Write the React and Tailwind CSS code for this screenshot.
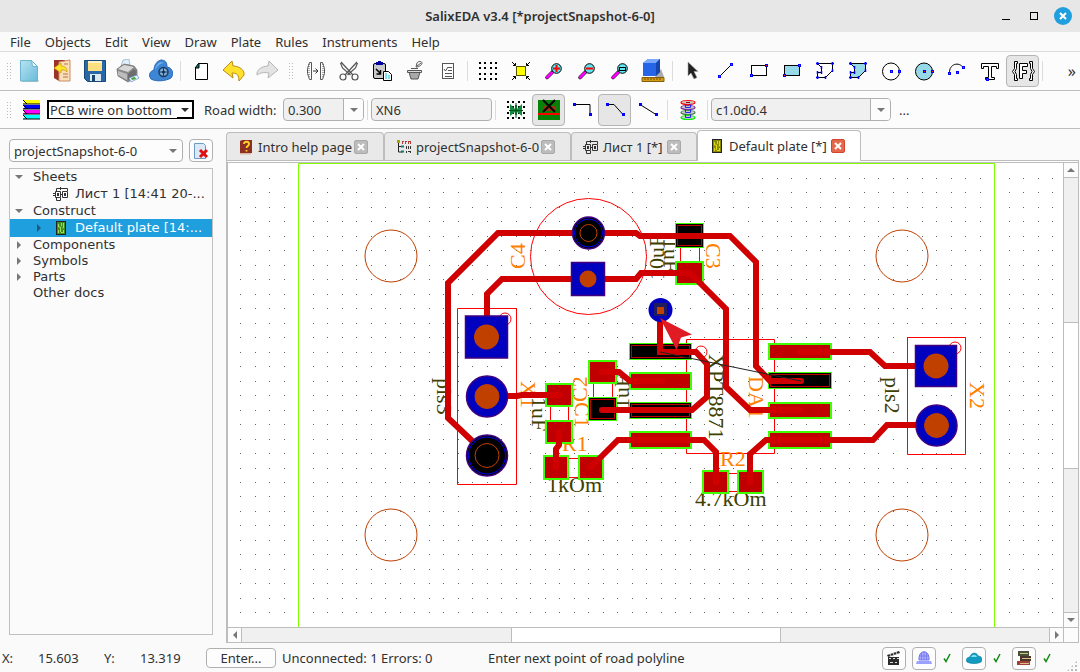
import { Fragment } from "react";

const RED = "#c00000";
const GREEN = "#40ff00";
const BLUE = "#0000bf";
const PURPLE = "#400080";
const ORANGE = "#c04000";

const MENU = ["File", "Objects", "Edit", "View", "Draw", "Plate", "Rules", "Instruments", "Help"];

// 24x24 drawings used by the toolbars
const ICONS = {
    new: (
        <>
            <path d="M4 21h18l-1 2H5z" fill="#b9c4c6" />
            <path d="M3.500 1.500h11l6 6v14.500h-17z" fill="url(#sky)" stroke="#6db5cf" />
            <path d="M14.500 1.500l1 6h5z" fill="#e3f6fc" stroke="#6db5cf" />
        </>
    ),
    open: (
        <>
            <path d="M4 1h11v2L9 22l-5-3z" fill="#9c3328" />
            <path d="M9 3l11-2v21H9z" fill="#f7dfb9" stroke="#cb8c62" />
            <path d="M13 15h5M13 18h5M14 5h4" stroke="#d5956d" strokeWidth="1.500" />
            <path d="M4 9l7-5v3c4 0 6 2 6 6-2-2-3-2-6-2v3z" fill="#ffe32b" stroke="#c6940b" strokeWidth=".7" />
        </>
    ),
    save: (
        <>
            <path d="M1.500 1.500h21v21h-18l-3-3z" fill="#2868a8" stroke="#174879" />
            <path d="M5 2h14v10H5z" fill="#ffdf80" />
            <path d="M5 2h14v2H5z" fill="#fff3c4" />
            <path d="M7 15h11v7H7z" fill="#dce8ef" />
            <path d="M9 16h3v6H9z" fill="#1c446f" />
        </>
    ),
    print: (
        <>
            <path d="M5 7L7 1l6-1 1 6z" fill="#dff0fc" stroke="#8eabc0" strokeWidth=".7" />
            <path d="M1 10l7-5 10 2 3 4v6l-9 6-10-6z" fill="#8a8a8a" stroke="#666" strokeWidth=".7" />
            <path d="M2 10l6-4 10 2-6 5z" fill="#d8d8d8" />
            <path d="M2 12l9 3v6l-9-5z" fill="#bdbdbd" />
            <path d="M12 15l6-5 2 2v5l-8 4z" fill="#6d6d6d" />
            <path d="M13 19l8-3 2 3-8 4z" fill="#f2f2f2" stroke="#5d8fd0" strokeWidth=".7" />
            <path d="M15 19l4-1 1 2-4 1z" fill="#36a53c" />
        </>
    ),
    cloud: (
        <>
            <path d="M2 20c-3-4-1-8 3-9 0-5 3-9 7-10 4 0 6 2 6 7 6 1 7 7 4 11-5 3-15 4-20 1z" fill="#3d86d6" stroke="#2769b4" />
            <path d="M6 11c1-7 6-9 9-7-4 0-7 3-9 7z" fill="#7ab5ee" />
            <circle cx="14.500" cy="13" r="4.500" fill="#7facd4" stroke="#1d3c62" strokeWidth="1.500" />
            <path d="M14.500 9v8M10.500 13h8" stroke="#1d3c62" />
            <circle cx="14.500" cy="13" r="1.500" fill="#143050" />
        </>
    ),
    page: (
        <>
            <path d="M10 4.500h8.500v16H6.500V9z" fill="#fff" stroke="#000" />
            <path d="M6 9l4-5v5z" fill="#008080" stroke="#000" />
        </>
    ),
    undo: <path d="M1 11l9-9 1 5c6 0 12 4 11 9l-5 6c0-6-2-8-7-8l1 5z" fill="#ffe12e" stroke="#b98b0e" />,
    redo: <path d="M23 11l-9-9-1 5C7 7 1 11 2 16c3-2 6-3 12-2l-1 5z" fill="#e3e3e3" stroke="#b5b5b5" />,
    mirror: (
        <g fill="none" stroke="#555">
            <path d="M7.500 3.500v17h-2l-1-3-1-3v-5l1-3 1-3zM16.500 3.500v17h2l1-3 1-3v-5l-1-3-1-3z" />
            <path d="M5 5v14M19 5v14" strokeDasharray="1 1" />
            <path d="M9 12h5M11.500 9.500l2.500 2.500-2.500 2.500" stroke="#333" />
        </g>
    ),
    cut: (
        <g fill="none" stroke="#555" strokeWidth="1.200">
            <path d="M4 3l12 13M3.500 4l2 5 8 7M20 3L8 16M20.500 4l-2 5-8 7" />
            <circle cx="6" cy="18" r="3" />
            <circle cx="18" cy="18" r="3" />
        </g>
    ),
    paste: (
        <>
            <rect x="3.500" y="4.500" width="12" height="15" rx="1.500" fill="#c9c9c9" stroke="#000" />
            <path d="M6 3h2V2h3v1h2v3H6z" fill="#0000a0" />
            <path d="M6 10l4 4M10.500 11v4h-4" stroke="#000" strokeWidth="1.500" fill="none" />
            <path d="M13.500 12.500h5l3 3v6h-8z" fill="#fff" stroke="#000" />
            <path d="M15 15h3M15 17h5M15 19h5" stroke="#00c8e0" strokeDasharray="2 1" />
        </>
    ),
    bucket: (
        <g stroke="#555">
            <path d="M6 13h11l-2 7H8z" fill="#aaa" />
            <path d="M4.500 11.500h14v2h-14zM8 9.500h7" fill="#ddd" />
            <path d="M13 8l1-4c1-2 5-2 5 0s-3 4-6 4zM14 7l4-3" fill="none" />
        </g>
    ),
    checklist: (
        <g fill="none" stroke="#555">
            <rect x="6.500" y="4.500" width="11" height="15" />
            <path d="M12 8.500h4M12 11.500h4M9 14.500h7M9 17.500h7M8 10l1.500 2L12 8" />
        </g>
    ),
    grid: (
        <g fill="#000">
            {[3, 8, 14, 19].map((x) => [3, 8, 14, 19].map((y) => <rect key={`${x}-${y}`} x={x} y={y} width="2" height="2" />))}
        </g>
    ),
    fit: (
        <>
            <rect x="7.500" y="7.500" width="9" height="9" fill="#ff0" stroke="#550" />
            <path d="M3 3l3.500 3.500M21 3l-3.500 3.500M3 21l3.500-3.500M21 21l-3.500-3.500M6.500 4v2.500H4M17.500 4v2.500H20M6.500 20v-2.500H4M17.500 20v-2.500H20" stroke="#000" fill="none" />
        </>
    ),
    zoomIn: <Magnifier sign={<path d="M11 9.500h7M14.500 6v7" stroke="#f00" strokeWidth="2" />} />,
    zoomOut: <Magnifier sign={<path d="M11 9.500h7" stroke="#f00" strokeWidth="2" />} />,
    zoomBox: <Magnifier sign={<rect x="11.500" y="8.500" width="6" height="3" fill="none" stroke="#000" />} />,
    cube: (
        <>
            <path d="M20 10l3 8h-9z" fill="#aaa" />
            <path d="M2 4l5-4h12v13l-4 4H2z" fill="#2765e8" />
            <path d="M2 4l5-4h12l-4 4z" fill="#79a9ff" />
            <path d="M15 4l4-4v13l-4 4z" fill="#1745ae" />
            <path d="M1 18.500h22v4H1z" fill="#d49c16" stroke="#85600b" />
            <path d="M4 19v2M7 19v2M10 19v2M13 19v2M16 19v2M19 19v2" stroke="#704b00" />
        </>
    ),
    pointer: <path d="M7 3v14l3-3 3 6 3-1.500-3-6h4z" fill="#222" stroke="#aaa" strokeWidth=".6" />,
    line: (
        <>
            <path d="M5 18L17 6" stroke="#000" />
            <Knots at={[[5, 17], [17, 5]]} />
        </>
    ),
    rect: (
        <>
            <rect x="4.500" y="6.500" width="15" height="10" fill="#fff" stroke="#000" />
            <Knots at={[[4, 16], [19, 6]]} />
        </>
    ),
    rectFill: (
        <>
            <rect x="4.500" y="6.500" width="15" height="10" fill="#96d9e8" stroke="#000" />
            <Knots at={[[4, 16], [19, 6]]} />
        </>
    ),
    poly: <Polygon fill="#fff" />,
    polyFill: <Polygon fill="#96d9e8" />,
    circle: (
        <>
            <circle cx="12" cy="12.500" r="8.500" fill="#fff" stroke="#000" />
            <Knots at={[[12, 12], [20, 12]]} />
        </>
    ),
    circleFill: (
        <>
            <circle cx="12" cy="12.500" r="8.500" fill="#96d9e8" stroke="#000" />
            <Knots at={[[12, 12], [20, 12]]} />
        </>
    ),
    arc: (
        <>
            <path d="M4.500 14C4 5 14 2 18.500 9" fill="none" stroke="#000" />
            <Knots at={[[4, 14], [12, 13], [18, 8]]} />
        </>
    ),
    text: (
        <>
            <path d="M3.500 4.500h17v5h-2v-2h-5v11h3v2h-9v-2h3v-11h-5v2h-2z" fill="#fff" stroke="#000" />
            <Knots at={[[9, 20]]} />
        </>
    ),
    format: (
        <g fill="#fff" stroke="#000">
            <path d="M6.500 2.500h-3v7l-2 3 2 3v6h3v-2h-1v-4l-1.500-3 1.500-3v-5h1zM18.500 2.500h3v7l2 3-2 3v6h-3v-2h1v-4l1.500-3-1.500-3v-5h-1z" />
            <path d="M8.500 4.500h8v3h-5v4h4v3h-4v5h-3z" />
        </g>
    ),
    layers: (
        <>
            {["#ff0", "#00f", "#f0f", "#0ff"].map((fill, i) => (
                <g key={fill} transform={`translate(0 ${i * 5 + 2})`}>
                    <path d="M5 0h17v4H5l2-2z" fill={fill} />
                    <path d="M5 0l4 4h13M5 4h4" stroke="#000" fill="none" />
                </g>
            ))}
        </>
    ),
    split: (
        <>
            <g fill="#000">
                {[3, 8, 14, 19].map((x) => [3, 8, 14, 19].map((y) => <rect key={`${x}-${y}`} x={x} y={y} width="2" height="2" />))}
            </g>
            <path d="M6 6l5 5V7h2v4l5-5v12l-5-4v3h-2v-3l-5 4z" fill="#108a3c" />
            <path d="M12 5v15M5 12.500h14" stroke="#064f1c" />
        </>
    ),
    plateCross: (
        <>
            <path d="M1 2h22v20H1z" fill="#078007" />
            <path d="M1 16h22" stroke="#f00" strokeWidth="2" />
            <path d="M6 8h12v5H6z" fill="#9a3410" />
            <path d="M6 2l12 12M18 2L6 14" stroke="#000" strokeWidth="2" />
        </>
    ),
    bendRight: (
        <>
            <path d="M4 6.500h16v11" fill="none" stroke="#000" />
            <Knots solid at={[[4, 6], [20, 16]]} />
        </>
    ),
    bendCut: (
        <>
            <path d="M4 6.500h7l9 10" fill="none" stroke="#000" />
            <Knots solid at={[[4, 6], [20, 16]]} />
        </>
    ),
    straight: (
        <>
            <path d="M4 6.500l16 10" stroke="#000" />
            <Knots solid at={[[4, 6], [20, 16]]} />
        </>
    ),
    via: (
        <>
            {["#f00", "#75309a", "#4b804b", "#0e0"].map((stroke, i) => (
                <ellipse key={stroke} cx="12" cy={4.5 + i * 5} rx="7" ry="2" fill="#ccc" stroke={stroke} strokeWidth="1.200" />
            ))}
            <path d="M9.500 6.500v3h5v-3M9.500 11.500v3h5v-3M9.500 16.500v3h5v-3" fill="none" stroke="#22f" />
            <path d="M10 4.500h4" stroke="#800" />
        </>
    ),
};

function Magnifier({ sign }) {
    return (
        <>
            <path d="M5 18.500l6-6" stroke="#000" strokeWidth="3.500" strokeLinecap="round" />
            <path d="M5 18.500l5-5" stroke="#f0f" strokeWidth="2.500" strokeLinecap="round" />
            <circle cx="14.500" cy="9.500" r="4.800" fill="#5fe6f2" stroke="#000" />
            {sign}
        </>
    );
}

function Knots({ at, solid }) {
    return at.map(([x, y]) => (
        <Fragment key={`${x}-${y}`}>
            <rect x={x - 1} y={y - 1} width="3" height="3" fill="#00f" />
            {!solid && <rect x={x} y={y} width="1" height="1" fill="#f22" />}
        </Fragment>
    ));
}

function Polygon({ fill }) {
    return (
        <>
            <path d="M4.500 4.500h15v7l-7 7h-8v-5h4v-5z" fill={fill} stroke="#000" />
            <path d="M4.500 3v3M3 4.500h3M19.500 3v3M18 4.500h3M19.500 10v3M12.500 17v3M4.500 17v3M3 18.500h3M4.500 12v3M8.500 12v3M8.500 7v3" stroke="#00f" strokeWidth="1.500" />
        </>
    );
}

function Icon({ name }) {
    return (
        <svg width="24" height="24" viewBox="0 0 24 24" fill="none" className="shrink-0" aria-hidden="true">
            {ICONS[name]}
        </svg>
    );
}

function Tool({ name, active }) {
    return (
        <button
            aria-label={name}
            className={`flex h-8 w-[33px] shrink-0 items-center justify-center rounded-sm ${active ? "border border-[#b5b5b5] bg-[#e6e6e6]" : ""}`}
        >
            <Icon name={name} />
        </button>
    );
}

function Grip({ className }) {
    return <div className={`h-[18px] w-1.5 shrink-0 bg-[radial-gradient(#bbb_1px,transparent_1px)] bg-[size:3px_3px] ${className}`} />;
}

function Separator() {
    return <div className="mx-[3px] h-5 w-px shrink-0 bg-[#dcdcdc]" />;
}

function Arrow({ dir = "down", color = "#777" }) {
    const paths = { down: "M0 2h8L4 6z", up: "M0 6h8L4 2z", left: "M6 0v8L2 4z", right: "M2 0v8l4-4z" };
    return (
        <svg width="8" height="8" viewBox="0 0 8 8" className="shrink-0" aria-hidden="true">
            <path d={paths[dir]} fill={color} />
        </svg>
    );
}

function Combo({ label, value, className }) {
    return (
        <div className={`flex h-[23px] shrink-0 overflow-hidden rounded-sm border border-[#b0b0b0] bg-[#f0f0f0] ${className}`}>
            <input aria-label={label} defaultValue={value} className="min-w-0 flex-1 px-1 outline-none" />
            <button aria-label={`${label} list`} className="flex w-5 items-center justify-center border-l border-[#b0b0b0] bg-[#fcfcfc]">
                <Arrow />
            </button>
        </div>
    );
}

function SheetIcon() {
    return (
        <svg width="16" height="16" viewBox="0 0 16 16" fill="none" stroke="#333" className="shrink-0" aria-hidden="true">
            <path d="M2.500 5.500h5v6h-5zM9.500 5.500h5v6h-5zM0 7.500h2.500M0 9.500h2.500M3.500 5V2.500h11V5M3.500 12v2.500h4V12M7 8.500h3M7.500 1v3M4.500 7v3M5.500 7v3M11.500 7v3M12.500 7v3" />
        </svg>
    );
}

function PlateIcon({ fill = "#3f8f22", line = "#9fdc5a" }) {
    return (
        <svg width="16" height="16" viewBox="0 0 16 16" fill="none" className="shrink-0" aria-hidden="true">
            <rect x="3.500" y="1.500" width="9" height="13" fill={fill} stroke="#222" />
            <path d="M5.500 4v3h2v5M8.500 3v3M10.500 3v5h-1M5.500 10v3M10.500 10v3M8 12.500h2" stroke={line} />
        </svg>
    );
}

function HelpIcon() {
    return (
        <svg width="16" height="16" viewBox="0 0 16 16" className="shrink-0" aria-hidden="true">
            <path d="M2 2l2-1h10v13H2z" fill="#8d3022" />
            <path d="M2 14h11v1.500H2z" fill="#d8b7a4" />
            <path d="M6 5c0-3 5-3 5 0 0 2-2.500 2-2.500 4M8.500 11v1.500" stroke="#ffd52b" strokeWidth="1.800" fill="none" />
        </svg>
    );
}

function ProjectIcon() {
    return (
        <svg width="16" height="16" viewBox="0 0 16 16" fill="none" className="shrink-0" aria-hidden="true">
            <path d="M2.500 2v11h4M2.500 7.500h4" stroke="#222" />
            <rect x="1" y="1" width="3" height="3" fill="#a4a400" />
            <path d="M6 2.500h2M9 2.500h2M12 2.500h3M6.500 2v3M9.500 2v3M12.500 2v3M14.500 2v3" stroke="#b03a3a" />
            <path d="M5 7.500h3M5 12.500h3" stroke="#0a8080" strokeWidth="2" />
            <path d="M10.500 7v3M12.500 7v3M14.500 7v3M10.500 12v2M12 12.500h3M14.500 12v2" stroke="#333" />
        </svg>
    );
}

const TABS = [
    { title: "Intro help page", icon: <HelpIcon />, width: "w-[158px]" },
    { title: "projectSnapshot-6-0", icon: <ProjectIcon />, width: "w-[187px]" },
    { title: "Лист 1 [*]", icon: <SheetIcon />, width: "w-[126px]" },
    { title: "Default plate [*]", icon: <PlateIcon fill="#8a8a00" line="#e0e000" />, width: "w-[164px]", active: true },
];

const TREE = [
    { title: "Sheets", arrow: "down" },
    { title: "Лист 1 [14:41 20-...", icon: <SheetIcon /> },
    { title: "Construct", arrow: "down" },
    { title: "Default plate [14:...", icon: <PlateIcon />, arrow: "right", selected: true },
    { title: "Components", arrow: "right" },
    { title: "Symbols", arrow: "right" },
    { title: "Parts", arrow: "right" },
    { title: "Other docs" },
];

function Tab({ title, icon, width, active }) {
    return (
        <div
            className={`flex items-center gap-1 rounded-t-sm border border-b-0 border-[#bdbdbd] pr-[15px] pl-[11px] ${width} ${
                active ? "-mb-px h-[31px] bg-white" : "h-7 bg-[#e9e9e9]"
            }`}
        >
            <button role="tab" aria-selected={!!active} className="flex min-w-0 flex-1 items-center gap-1 whitespace-nowrap">
                {icon}
                {title}
            </button>
            <button
                aria-label={`Close ${title}`}
                className={`flex h-[14px] w-[14px] shrink-0 items-center justify-center rounded-xs border ${
                    active ? "border-[#d3452c] bg-[#e4694c]" : "border-[#a9a9a9] bg-[#bcbcbc]"
                }`}
            >
                <svg width="8" height="8" viewBox="0 0 8 8" aria-hidden="true">
                    <path d="M1 1l6 6M7 1L1 7" stroke="#fff" strokeWidth="2" />
                </svg>
            </button>
        </div>
    );
}

function Sidebar() {
    return (
        <aside className="flex w-[213px] shrink-0 flex-col gap-1.5 pt-2.5 pb-2 pl-[9px]">
            <div className="flex justify-between">
                <label className="relative flex w-[174px]">
                    <select aria-label="Project" className="h-[23px] w-full appearance-none rounded-sm border border-[#b0b0b0] bg-[#fdfdfd] px-1">
                        <option>projectSnapshot-6-0</option>
                    </select>
                    <span className="pointer-events-none absolute top-2 right-1.5">
                        <Arrow />
                    </span>
                </label>
                <button aria-label="Close project" className="flex h-[23px] w-6 items-center justify-center rounded-sm border border-[#b0b0b0] bg-[#fdfdfd]">
                    <svg width="16" height="16" viewBox="0 0 16 16" aria-hidden="true">
                        <path d="M1.500 .5h9l2 2v13h-11z" fill="#dbe9f6" stroke="#6b9bc3" />
                        <path d="M7 7l7 7M14 7l-7 7" stroke="#d11" strokeWidth="3" />
                    </svg>
                </button>
            </div>
            <ul className="flex-1 border border-[#c0c0c0] bg-[#fbfbfb] font-['DejaVu_Sans',sans-serif]">
                {TREE.map(({ title, icon, arrow, selected }) => (
                    <li
                        key={title}
                        className={`flex items-center whitespace-nowrap ${icon ? "h-[18px] pl-[25px]" : "h-4 pl-[5px]"} ${selected ? "bg-[#209fdf] text-white" : ""}`}
                    >
                        <span className="flex w-[18px] shrink-0">{arrow && <Arrow dir={arrow} color={selected ? "#175a80" : "#777"} />}</span>
                        {icon && <span className="mr-1.5">{icon}</span>}
                        {title}
                    </li>
                ))}
            </ul>
        </aside>
    );
}

const ROUTES = [
    "M588 233H498L448 283V418L487 455",
    "M588 233H636L640 236H730L756 262V366L770 381H801",
    "M487 337V294L502 279H636L641 273H690L726 309V387L750 410H800",
    "M660 310V352H696L707 364V397L692 410H602",
    "M487 396H517L522 395H560",
    "M602 372H619L630 381H662",
    "M559 432V445L556 449V467",
    "M591 467L618 440H704L716 452V482",
    "M750 482V454L766 440H873L887 425H936",
    "M800 352H870L885 366H936",
];

// [x, y, width, height, joined]: joined pads are drawn black with a thin frame
const PADS = [
    [675, 223, 29, 25, true], [675, 261, 29, 24], [545, 383, 28, 24], [545, 420, 28, 24],
    [588, 360, 29, 24], [588, 397, 29, 24, true], [543, 455, 26, 25], [578, 455, 26, 25],
    [702, 470, 27, 24], [737, 470, 27, 24],
    [629, 343, 63, 17, true], [629, 372, 63, 18], [629, 402, 63, 17, true], [629, 431, 63, 18],
    [768, 343, 64, 17], [768, 372, 64, 17, true], [768, 402, 64, 17], [768, 431, 64, 18],
];

// [text, x, y, angle, color]
const LABELS = [
    ["C4", 525, 269, -90, "#ff8000"], ["C3", 706, 243, 90, "#ff8000"], ["X1", 521, 381, 90, "#ff8000"],
    ["C2", 587, 402, -90, "#ff8000"], ["C1", 575, 402, 90, "#ff8000"], ["DA1", 749, 376, 90, "#ff8000"],
    ["X2", 970, 382, 90, "#ff8000"], ["R1", 562, 451, 0, "#ff8000"], ["R2", 720, 466, 0, "#ff8000"],
    ["10uF", 664, 280, -90, "#404000"], ["1uF", 664, 238, 90, "#404000"], ["1uF", 532, 397, 90, "#404000"],
    ["1uF", 629, 409, -90, "#404000"], ["pls3", 437, 378, 90, "#404000"], ["pls2", 885, 377, 90, "#404000"],
    ["XPT8871", 709, 354, 90, "#404000"], ["1kOm", 547, 492, 0, "#404000"], ["4.7kOm", 695, 506, 0, "#404000"],
];

function gridPath() {
    let d = "";
    for (let i = 0; i < 140; i++) {
        for (let j = 0; j < 80; j++) {
            d += `M${Math.floor(240.5 + i * 14.5)} ${Math.floor(178.4 + j * 14.48)}h1v1h-1z`;
        }
    }
    return d;
}

function HolePad({ x, y, r, hole, joined }) {
    return (
        <>
            <circle cx={x} cy={y} r={r} fill={joined ? "#000" : BLUE} stroke={PURPLE} strokeWidth="1.500" />
            {joined && <circle cx={x} cy={y} r={r - 2} fill="none" stroke="#0000ff" />}
            <circle cx={x} cy={y} r={hole} fill={joined ? "none" : ORANGE} stroke={ORANGE} />
        </>
    );
}

function SquarePad({ x, y, size, hole }) {
    return (
        <>
            <rect x={x - size / 2} y={y - size / 2} width={size} height={size} fill={BLUE} stroke={PURPLE} strokeWidth="1.500" />
            <circle cx={x} cy={y} r={hole} fill={ORANGE} />
        </>
    );
}

function Board() {
    return (
        <svg className="absolute inset-0 h-full w-full" role="img" aria-label="Default plate">
            <g transform="translate(-228 -163)">
                <path d={gridPath()} fill="#666" shapeRendering="crispEdges" />
                <path d="M298.500 2000V163.500H994.500V2000" fill="none" stroke="#80ff00" />
                <g fill="none" stroke={ORANGE}>
                    <circle cx="391" cy="256" r="26" />
                    <circle cx="902" cy="256" r="26" />
                    <circle cx="391" cy="535" r="26" />
                    <circle cx="902" cy="535" r="26" />
                </g>
                <g fill="none" stroke="#f00">
                    <circle cx="588.500" cy="256.500" r="58" />
                    <circle cx="505" cy="319" r="6" />
                    <circle cx="955" cy="348" r="6" />
                    <circle cx="701" cy="352" r="6" />
                    <path d="M457.500 308.500h59v176h-59zM907.500 337.500h58v117h-58zM686.500 339.500h88v114h-88z" />
                    <path d="M680.500 248v13M699.500 248v13M550.500 407v13M568.500 407v13M593.500 384v13M612.500 384v13" />
                    <path d="M569 458.500h9M569 477.500h9M729 473.500h8M729 491.500h8" />
                </g>
                <g className="font-['Liberation_Serif',serif] text-[22px]">
                    {LABELS.map(([text, x, y, angle, color]) => (
                        <text key={`${text}-${x}`} transform={`translate(${x} ${y}) rotate(${angle})`} fill={color}>
                            {text}
                        </text>
                    ))}
                </g>
                {PADS.map(([x, y, w, h, joined]) => (
                    <g key={`${x}-${y}`} shapeRendering="crispEdges">
                        <rect x={x} y={y} width={w} height={h} fill={GREEN} />
                        {joined ? (
                            <>
                                <rect x={x + 1} y={y + 1} width={w - 2} height={h - 2} fill="#000" />
                                <rect x={x + 2.5} y={y + 2.5} width={w - 5} height={h - 5} fill="none" stroke={RED} />
                            </>
                        ) : (
                            <rect x={x + 2} y={y + 2} width={w - 4} height={h - 4} fill={RED} />
                        )}
                    </g>
                ))}
                <g fill="none" stroke="#d00000" strokeWidth="6" strokeLinecap="round">
                    {ROUTES.map((d) => (
                        <path key={d} d={d} />
                    ))}
                </g>
                <HolePad x={588.5} y={233} r={16} hole={8.5} joined />
                <SquarePad x={588} y={279} size={33} hole={8.5} />
                <SquarePad x={486.5} y={337} size={42} hole={12.5} />
                <HolePad x={487} y={396.5} r={20.5} hole={12} />
                <HolePad x={487} y={455.5} r={20.5} hole={12} joined />
                <SquarePad x={936} y={366} size={41} hole={12.5} />
                <HolePad x={936.5} y={425.5} r={20.5} hole={12} />
                <circle cx="660.500" cy="310" r="12" fill={BLUE} />
                <path d="M654 303h13v13h-13z" fill="#201c60" />
                <path d="M657 307h7v7h-7z" fill={ORANGE} />
                <path d="M660 352L801 381" stroke="#222" />
                <path d="M660 318L692 334.500L681 337.500L676.500 350z" fill="#e01b24" />
            </g>
        </svg>
    );
}

function Editor() {
    return (
        <main className="flex min-w-0 flex-1 flex-col pt-px pr-px pl-[13px]">
            <div role="tablist" className="z-10 flex h-[30px] items-end">
                {TABS.map((tab) => (
                    <Tab key={tab.title} {...tab} />
                ))}
            </div>
            <div className="flex flex-1 flex-col border border-[#bdbdbd] bg-white pt-px">
                <div className="flex min-h-0 flex-1 border-t border-l border-[#bdbdbd]">
                    <div className="relative min-w-0 flex-1 overflow-hidden bg-white">
                        <Board />
                    </div>
                    <div className="flex w-[15px] flex-col border-l border-[#bdbdbd] bg-[#f0f0f0]">
                        <button aria-label="Scroll up" className="flex h-[15px] items-center justify-center border-b border-[#bdbdbd] bg-[#fcfcfc]">
                            <Arrow dir="up" />
                        </button>
                        <div className="flex-1" />
                        <div className="h-[147px] border-y border-[#bdbdbd] bg-white" />
                        <div className="flex-1" />
                        <button aria-label="Scroll down" className="flex h-[15px] items-center justify-center border-t border-[#bdbdbd] bg-[#fcfcfc]">
                            <Arrow />
                        </button>
                    </div>
                </div>
                <div className="flex h-[15px] border-t border-l border-[#bdbdbd] bg-[#f0f0f0]">
                    <button aria-label="Scroll left" className="flex w-[14px] items-center justify-center border-r border-[#bdbdbd] bg-[#fcfcfc]">
                        <Arrow dir="left" />
                    </button>
                    <div className="flex-1" />
                    <div className="w-[270px] border-x border-[#bdbdbd] bg-white" />
                    <div className="flex-1" />
                    <button aria-label="Scroll right" className="flex w-[14px] items-center justify-center border-l border-[#bdbdbd] bg-[#fcfcfc]">
                        <Arrow dir="right" />
                    </button>
                    <div className="w-[15px] border-l border-[#bdbdbd] bg-[#fcfcfc]" />
                </div>
            </div>
        </main>
    );
}

function StatusButton({ label, children }) {
    return (
        <button aria-label={label} className="flex h-[23px] w-6 items-center justify-center rounded-sm border border-[#b0b0b0] bg-[#fdfdfd]">
            <svg width="16" height="16" viewBox="0 0 16 16" fill="none" aria-hidden="true">
                {children}
            </svg>
        </button>
    );
}

function Check() {
    return (
        <svg width="8" height="10" viewBox="0 0 8 10" className="mr-[11px] ml-[7px]" aria-hidden="true">
            <path d="M1 5.500l2 3L7 1" fill="none" stroke="#128a12" strokeWidth="1.500" />
        </svg>
    );
}

function StatusBar() {
    return (
        <footer className="flex h-[29px] shrink-0 items-center pt-px whitespace-nowrap">
            <span className="w-9 pl-0.5">X:</span>
            <span className="w-[68px] pl-0.5">15.603</span>
            <span className="w-9">Y:</span>
            <span className="w-[66px]">13.319</span>
            <button className="h-5 w-[70px] rounded-sm border border-[#b0b0b0] bg-[#fdfdfd] leading-4">Enter...</button>
            <span className="w-[105px] pl-1.5">Unconnected: 1</span>
            <span className="w-[107px]">Errors: 0</span>
            <span className="flex-1">Enter next point of road polyline</span>
            <div className="mr-1 flex items-center">
                <StatusButton label="Record">
                    <path d="M1 5l12-4 1 2-12 4zM2 7h11v8H2z" fill="#2a2a2a" />
                    <path d="M4 4l1 2M7 3l1 2M10 2l1 2M3 8.500h2M7 8.500h2M11 8.500h2M4 12.500h3M9 12.500h2" stroke="#ddd" />
                </StatusButton>
                <span className="w-1.5" />
                <StatusButton label="Server">
                    <path d="M3 10C2-1 14-1 13 10z" fill="#a9acff" stroke="#7377ea" />
                    <path d="M3 6h10M8 2v8M5.500 3v7M10.500 3v7" stroke="#7377ea" strokeWidth=".8" />
                    <path d="M1 11h14l1 3H0z" fill="#9ca0ff" />
                </StatusButton>
                <Check />
                <StatusButton label="Cloud">
                    <path d="M1 12c-2-3 1-5 3-5 1-5 7-5 8-1 4 0 5 4 3 6-4 2-10 2-14 0z" fill="#119bc0" stroke="#08759a" strokeWidth=".6" />
                    <path d="M5 7c1-3 5-3 6 0z" fill="#7fe0f2" />
                </StatusButton>
                <Check />
                <StatusButton label="Library">
                    <path d="M2 1h11v5H2z" fill="#49503b" />
                    <path d="M4 6h11v5H4z" fill="#49372b" />
                    <path d="M1 11h13v4H1z" fill="#a33e38" />
                    <path d="M4 3.500h8M6 8.500h9M4 13.500h9" stroke="#d8c08a" />
                </StatusButton>
                <Check />
            </div>
            <div className="mr-0.5 h-3 w-3 self-end bg-[radial-gradient(#bbb_1px,transparent_1px)] bg-[size:4px_4px] [clip-path:polygon(100%_0,100%_100%,0_100%)]" />
        </footer>
    );
}

export default function App() {
    return (
        <div className="flex h-screen flex-col overflow-hidden bg-[#fafafa] font-['Noto_Sans',sans-serif] text-[13px] leading-4 text-[#303030]">
            <svg className="absolute h-0 w-0" aria-hidden="true">
                <linearGradient id="sky" x1="0" y1="0" x2="1" y2="1">
                    <stop stopColor="#b7e3f2" />
                    <stop offset="1" stopColor="#69bbd8" />
                </linearGradient>
            </svg>
            <header className="flex h-8 shrink-0 items-center bg-[#e7e7e7]">
                <div className="w-[80px]" />
                <h1 className="flex-1 text-center font-semibold">SalixEDA v3.4 [*projectSnapshot-6-0]</h1>
                <div className="flex w-[80px] items-center justify-end gap-4 pr-2">
                    <button aria-label="Minimize" className="mr-1 h-2 w-2 border-b border-black" />
                    <button aria-label="Maximize" className="h-2 w-2 border border-black" />
                    <button aria-label="Close" className="flex h-[18px] w-[18px] shrink-0 items-center justify-center rounded-full bg-[#209fdf]">
                        <svg width="8" height="8" viewBox="0 0 8 8" aria-hidden="true">
                            <path d="M1 1l6 6M7 1L1 7" stroke="#fff" strokeWidth="2" />
                        </svg>
                    </button>
                </div>
            </header>
            <nav className="flex h-5 shrink-0 items-center gap-[14px] border-b border-[#dcdcdc] pl-2.5">
                {MENU.map((item) => (
                    <button key={item}>{item}</button>
                ))}
            </nav>
            <div className="flex h-[39px] shrink-0 items-center border-b border-[#bdbdbd] bg-[#fcfcfc]">
                <Grip className="ml-1.5" />
                {["new", "open", "save", "print", "cloud"].map((name) => <Tool key={name} name={name} />)}
                <Separator />
                {["page", "undo", "redo"].map((name) => <Tool key={name} name={name} />)}
                <Grip className="mx-[5px]" />
                {["mirror", "cut", "paste", "bucket", "checklist"].map((name) => <Tool key={name} name={name} />)}
                <Separator />
                {["grid", "fit", "zoomIn", "zoomOut", "zoomBox", "cube"].map((name) => <Tool key={name} name={name} />)}
                <Separator />
                {["pointer", "line", "rect", "rectFill", "poly", "polyFill", "circle", "circleFill", "arc", "text"].map((name) => <Tool key={name} name={name} />)}
                <Tool name="format" active />
                <Separator />
                <button aria-label="More tools" className="ml-auto pr-1 text-base">»</button>
            </div>
            <div className="flex h-[38px] shrink-0 items-center border-b border-[#bdbdbd] bg-[#fcfcfc] whitespace-nowrap">
                <Grip className="ml-1.5" />
                <div className="flex w-[35px] justify-end pr-[5px]">
                    <Icon name="layers" />
                </div>
                <label className="relative flex w-[147px] shrink-0">
                    <select aria-label="Layer" className="h-[19px] w-full appearance-none border border-t-2 border-l-2 border-black bg-white px-px">
                        <option>PCB wire on bottom</option>
                    </select>
                    <span className="pointer-events-none absolute top-0.5 right-px flex h-4 w-4 items-center justify-center border-r border-b border-black bg-white">
                        <Arrow color="#2d2d2d" />
                    </span>
                </label>
                <span className="w-[89px] shrink-0 pl-2.5">Road width:</span>
                <Combo label="Road width" value="0.300" className="w-[81px]" />
                <Separator />
                <input aria-label="Net name" defaultValue="XN6" className="h-[23px] w-[121px] shrink-0 rounded-sm border border-[#b0b0b0] bg-[#f0f0f0] px-1" />
                <Separator />
                <Tool name="split" />
                <Tool name="plateCross" active />
                <Tool name="bendRight" />
                <Tool name="bendCut" active />
                <Tool name="straight" />
                <Separator />
                <Tool name="via" />
                <Separator />
                <Combo label="Via type" value="c1.0d0.4" className="w-[180px]" />
                <button className="ml-2">...</button>
            </div>
            <div className="flex min-h-0 flex-1">
                <Sidebar />
                <Editor />
            </div>
            <StatusBar />
        </div>
    );
}
